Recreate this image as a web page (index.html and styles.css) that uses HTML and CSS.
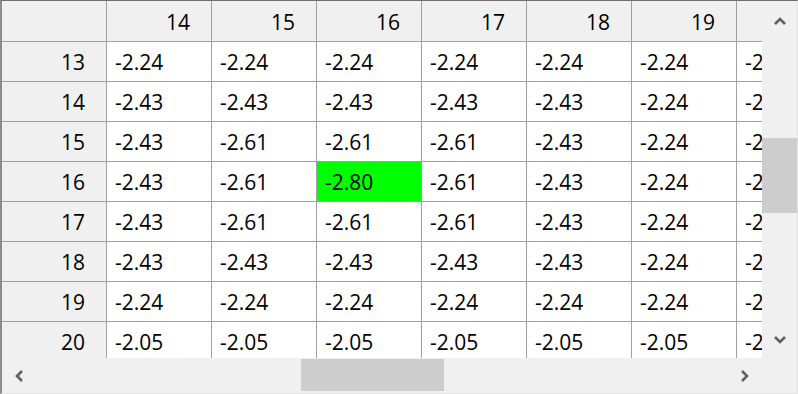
FILE: index.html
```html
<!DOCTYPE html>
<html>
<head>
<meta charset="utf-8">
<link rel="stylesheet" href="styles.css">
</head>
<body>
<div class="frame">
  <div class="viewport">
    <div class="row head">
      <div class="rh"></div>
      <div class="ch">14</div><div class="ch">15</div><div class="ch">16</div><div class="ch">17</div><div class="ch">18</div><div class="ch">19</div><div class="ch">20</div>
    </div>
    <div class="row">
      <div class="rh">13</div>
      <div class="c">-2.24</div><div class="c">-2.24</div><div class="c">-2.24</div><div class="c">-2.24</div><div class="c">-2.24</div><div class="c">-2.24</div><div class="c">-2.24</div>
    </div>
    <div class="row">
      <div class="rh">14</div>
      <div class="c">-2.43</div><div class="c">-2.43</div><div class="c">-2.43</div><div class="c">-2.43</div><div class="c">-2.43</div><div class="c">-2.24</div><div class="c">-2.24</div>
    </div>
    <div class="row">
      <div class="rh">15</div>
      <div class="c">-2.43</div><div class="c">-2.61</div><div class="c">-2.61</div><div class="c">-2.61</div><div class="c">-2.43</div><div class="c">-2.24</div><div class="c">-2.24</div>
    </div>
    <div class="row">
      <div class="rh">16</div>
      <div class="c">-2.43</div><div class="c">-2.61</div><div class="c hl">-2.80</div><div class="c">-2.61</div><div class="c">-2.43</div><div class="c">-2.24</div><div class="c">-2.24</div>
    </div>
    <div class="row">
      <div class="rh">17</div>
      <div class="c">-2.43</div><div class="c">-2.61</div><div class="c">-2.61</div><div class="c">-2.61</div><div class="c">-2.43</div><div class="c">-2.24</div><div class="c">-2.24</div>
    </div>
    <div class="row">
      <div class="rh">18</div>
      <div class="c">-2.43</div><div class="c">-2.43</div><div class="c">-2.43</div><div class="c">-2.43</div><div class="c">-2.43</div><div class="c">-2.24</div><div class="c">-2.24</div>
    </div>
    <div class="row">
      <div class="rh">19</div>
      <div class="c">-2.24</div><div class="c">-2.24</div><div class="c">-2.24</div><div class="c">-2.24</div><div class="c">-2.24</div><div class="c">-2.24</div><div class="c">-2.24</div>
    </div>
    <div class="row">
      <div class="rh">20</div>
      <div class="c">-2.05</div><div class="c">-2.05</div><div class="c">-2.05</div><div class="c">-2.05</div><div class="c">-2.05</div><div class="c">-2.05</div><div class="c">-2.05</div>
    </div>
  </div>
  <div class="vscroll">
    <div class="vbtn up"><svg width="12" height="8" viewBox="0 0 12 8"><polyline points="1,7 6,2 11,7" fill="none" stroke="#606060" stroke-width="2.6"/></svg></div>
    <div class="vtrack"><div class="vthumb"></div></div>
    <div class="vbtn down"><svg width="12" height="8" viewBox="0 0 12 8"><polyline points="1,1 6,6 11,1" fill="none" stroke="#606060" stroke-width="2.6"/></svg></div>
  </div>
  <div class="hscroll">
    <div class="hbtn left"><svg width="8" height="12" viewBox="0 0 8 12"><polyline points="7,1 2,6 7,11" fill="none" stroke="#606060" stroke-width="2.6"/></svg></div>
    <div class="htrack"><div class="hthumb"></div></div>
    <div class="hbtn right"><svg width="8" height="12" viewBox="0 0 8 12"><polyline points="1,1 6,6 1,11" fill="none" stroke="#606060" stroke-width="2.6"/></svg></div>
  </div>
  <div class="corner"></div>
</div>
</body>
</html>
```
FILE: styles.css
```css
html, body {
  margin: 0;
  padding: 0;
  background: #ffffff;
}
.frame {
  width: 798px;
  height: 394px;
  box-sizing: border-box;
  border-top: 1px solid #6e6e6e;
  border-left: 2px solid #8c8c8c;
  border-right: 1px solid #e3e3e3;
  border-bottom: 1px solid #e3e3e3;
  display: grid;
  grid-template-columns: 760px 35px;
  grid-template-rows: 357px 35px;
  font-family: "Open Sans", "Noto Sans", sans-serif;
  font-size: 21px;
  color: #000;
  background: #f0f0f0;
}
.viewport {
  overflow: hidden;
  background: #ffffff;
}
.row {
  display: flex;
  height: 40px;
}
.row.head {
  height: 41px;
}
.rh, .ch, .c {
  flex: 0 0 105px;
  box-sizing: border-box;
  border-right: 1px solid #a0a0a0;
  border-bottom: 1px solid #a0a0a0;
  display: flex;
  align-items: center;
  white-space: nowrap;
  overflow: hidden;
  line-height: 1;
}
.rh {
  background: #f0f0f0;
  justify-content: flex-end;
  padding-right: 21px;
  padding-top: 2px;
}
.ch {
  background: #f0f0f0;
  justify-content: flex-end;
  padding-right: 21px;
  padding-top: 3px;
}
.c {
  background: #ffffff;
  padding-left: 8px;
  padding-top: 2px;
}
.c.hl {
  background: #00ff00;
}
.vscroll {
  display: flex;
  flex-direction: column;
  background: #f0f0f0;
}
.vbtn {
  flex: 0 0 auto;
  display: flex;
  justify-content: center;
  align-items: center;
}
.vbtn.up { height: 40px; }
.vbtn.down { height: 36px; }
.vtrack {
  flex: 1;
}
.vthumb {
  margin-top: 97px;
  height: 75px;
  background: #cdcdcd;
}
.hscroll {
  display: flex;
  background: #f0f0f0;
}
.hbtn {
  flex: 0 0 34px;
  display: flex;
  justify-content: center;
  align-items: center;
}
.htrack {
  flex: 1;
  padding-top: 1px;
}
.hthumb {
  margin-left: 265px;
  width: 143px;
  height: 32px;
  background: #cdcdcd;
}
.corner {
  background: #f0f0f0;
}
```
